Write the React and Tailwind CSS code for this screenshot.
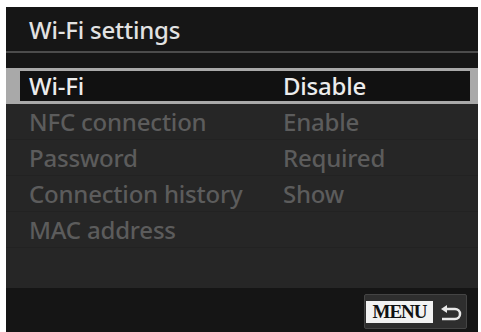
export default function App() {
  const rows = [
    ['NFC connection', 'Enable'],
    ['Password', 'Required'],
    ['Connection history', 'Show'],
    ['MAC address', ''],
  ]

  return (
    <div className="w-[481px] h-[332px] bg-white pl-[6px] pr-[3px] pt-[7px] overflow-hidden"
      style={{ fontFamily: '"Noto Sans", "Open Sans", sans-serif' }}>
      <div className="h-[325px] bg-[#161616] flex flex-col">
        {/* Title */}
        <div className="h-[44px] flex items-center pl-[23px] pt-[2px]">
          <span className="text-[24px] font-medium text-[#e2e2e2] tracking-[-0.2px]">Wi-Fi settings</span>
        </div>
        <div className="h-[2px] bg-[#4c4c4c]" />
        <div className="h-[15px]" />

        {/* Selected row */}
        <div className="h-[36px] bg-[#a9a9a9] pl-[14px] pr-[8px] py-[3px]">
          <div className="h-full bg-[#111111] flex items-center pl-[9px]">
            <span className="w-[254px] text-[24px] font-medium text-[#ececec] tracking-[-0.2px]">Wi-Fi</span>
            <span className="text-[24px] font-medium text-[#ececec] tracking-[-0.2px]">Disable</span>
          </div>
        </div>

        {/* Other rows */}
        <div className="h-[184px] bg-[#262626] flex flex-col">
          {rows.map(([label, value]) => (
            <div key={label} className="h-[36px] flex items-center pl-[23px] border-b border-[#222222]">
              <span className="w-[254px] text-[24px] font-medium text-[#5c5c5c] tracking-[-0.2px]">{label}</span>
              <span className="text-[24px] font-medium text-[#5c5c5c] tracking-[-0.2px]">{value}</span>
            </div>
          ))}
        </div>

        {/* Footer */}
        <div className="flex-1 bg-[#151515] flex justify-end items-end pr-[11px] pb-[3px]">
          <div className="h-[35px] w-[103px] bg-[#2e2e2e] border border-[#444] rounded-[2px] flex items-center pl-[1px] gap-[5px]">
            <div className="h-[22px] w-[67px] bg-[#f2f2f2] flex items-center justify-center">
              <span className="text-[19px] font-bold text-[#111] leading-none tracking-[-1px]"
                style={{ fontFamily: '"Liberation Serif", serif' }}>MENU</span>
            </div>
            <svg width="24" height="20" viewBox="0 0 24 20" fill="none">
              <path d="M9 3 L3 7 L9 11 Z" fill="#e8e8e8" />
              <path d="M7 7 H17 a5 5 0 0 1 0 10 H4" stroke="#e8e8e8" strokeWidth="2.5" fill="none" />
            </svg>
          </div>
        </div>
      </div>
    </div>
  )
}
